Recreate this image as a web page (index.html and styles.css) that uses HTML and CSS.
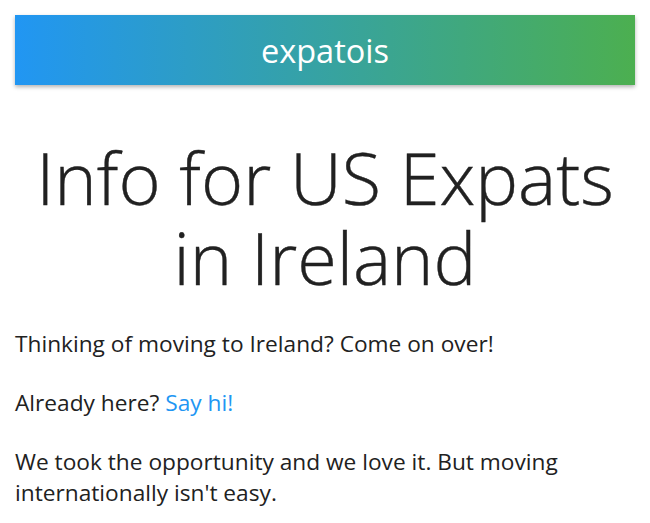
FILE: index.html
```html
<!DOCTYPE html>
<html>
<head>
<meta charset="utf-8">
<link rel="stylesheet" href="styles.css">
</head>
<body>
<div class="page">
  <header class="banner">expatois</header>
  <h1 class="title">Info for US Expats in Ireland</h1>
  <p class="text">Thinking of moving to Ireland? Come on over!</p>
  <p class="text">Already here? <a class="link" href="#">Say hi!</a></p>
  <p class="text">We took the opportunity and we love it. But moving internationally isn't easy.</p>
</div>
</body>
</html>
```
FILE: styles.css
```css
html, body { margin: 0; padding: 0; background: #fff; }
body { font-family: "Open Sans", "Noto Sans", sans-serif; color: #212121; }
.page { padding: 15px 15px 0; }
.banner {
  height: 70px;
  display: flex;
  align-items: center;
  justify-content: center;
  background: linear-gradient(to right, #2196f3, #4caf50);
  color: #fff;
  font-size: 32.5px;
  box-shadow: 0 2px 4px rgba(0,0,0,0.3);
}
.title {
  font-size: 72px;
  font-weight: 300;
  line-height: 80px;
  text-align: center;
  margin: 52px 0 31px;
  -webkit-text-stroke: 0.4px #212121;
}
.text {
  font-size: 22.7px;
  line-height: 31px;
  margin: 0 0 28px;
}
.text:last-child { margin-bottom: 0; }
.link { color: #2196f3; text-decoration: none; }
```
